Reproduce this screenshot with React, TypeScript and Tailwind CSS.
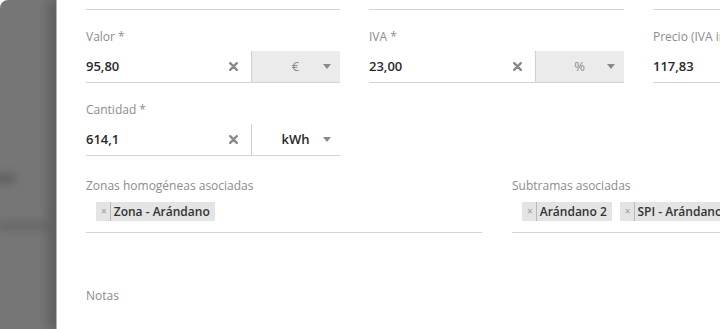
import React from 'react'

function ClearIcon() {
  return (
    <svg width="9" height="9" viewBox="0 0 9 9" className="shrink-0">
      <path d="M1.2 1.2 L7.8 7.8 M7.8 1.2 L1.2 7.8" stroke="#8a8a8a" strokeWidth="2.4" strokeLinecap="round" />
    </svg>
  )
}

function Caret() {
  return (
    <svg width="8" height="5" viewBox="0 0 8 5" className="shrink-0">
      <path d="M0 0 L8 0 L4 5 Z" fill="#8a8a8a" />
    </svg>
  )
}

function Label({ children }: { children: React.ReactNode }) {
  return <div className="text-[12px] leading-[16px] text-[#8c8c8c] whitespace-nowrap">{children}</div>
}

function UnitField({ label, value, unit, muted }: { label: string; value: string; unit: string; muted?: boolean }) {
  return (
    <div className="pt-[19px]">
      <Label>{label}</Label>
      <div className="mt-[6px] h-[32px] flex items-center border-b border-[#d4d4d4]">
        <span className="flex-1 text-[13px] font-semibold text-[#2a2a2a]">{value}</span>
        <ClearIcon />
        <div
          className={
            muted
              ? 'ml-[13px] w-[89px] h-full flex items-center border-l border-[#cfcfcf] bg-[#ebebeb]'
              : 'ml-[13px] w-[89px] h-full flex items-center border-l border-[#cfcfcf] bg-white'
          }
        >
          <span
            className={
              muted
                ? 'flex-1 pl-[16px] text-center text-[13px] text-[#8a8a8a]'
                : 'flex-1 pl-[16px] text-center text-[13px] font-semibold text-[#2a2a2a]'
            }
          >
            {unit}
          </span>
          <span className="mr-[9px]">
            <Caret />
          </span>
        </div>
      </div>
    </div>
  )
}

function Chip({ text }: { text: string }) {
  return (
    <div className="h-[19px] flex items-center bg-[#e4e4e4] shrink-0">
      <span className="pl-[5px] pr-[3px] text-[10px] leading-[19px] text-[#999]">×</span>
      <span className="h-full border-l border-[#b9b9b9]"></span>
      <span className="pl-[3px] pr-[5px] text-[12px] font-semibold text-[#333] whitespace-nowrap">{text}</span>
    </div>
  )
}

function TagField({ label, chips }: { label: string; chips: string[] }) {
  return (
    <div className="pt-[22px]">
      <Label>{label}</Label>
      <div className="mt-[6px] h-[33px] flex gap-[8px] pt-[2px] pl-[10px] border-b border-[#d4d4d4] overflow-hidden">
        {chips.map((c) => (
          <Chip key={c} text={c} />
        ))}
      </div>
    </div>
  )
}

export default function App() {
  return (
    <div className="w-[720px] h-[329px] overflow-hidden flex bg-white" style={{ fontFamily: '"Open Sans", "Noto Sans", sans-serif' }}>
      <div className="w-[56px] shrink-0 relative bg-[#767676] rounded-tl-[8px] overflow-hidden">
        <div className="absolute top-[174px] left-[-6px] w-[22px] h-[9px] rounded-full bg-[#5e5e5e] blur-[4px]"></div>
        <div className="absolute top-[222px] left-[-4px] w-[52px] h-[8px] rounded-full bg-[#666] blur-[4px]"></div>
      </div>
      <div className="flex-1 min-w-0 overflow-hidden bg-white border-l border-[#b3b3b3] shadow-[-8px_0_10px_rgba(0,0,0,0.2)] relative">
        <div className="w-[822px] ml-[29px]">
          <div className="grid grid-cols-[254px_255px_255px] gap-x-[29px]">
            <div className="h-[10px] border-b border-[#d4d4d4]"></div>
            <div className="h-[10px] border-b border-[#d4d4d4]"></div>
            <div className="h-[10px] border-b border-[#d4d4d4]"></div>

            <UnitField label="Valor *" value="95,80" unit="€" muted />
            <UnitField label="IVA *" value="23,00" unit="%" muted />
            <div className="pt-[19px]">
              <Label>Precio (IVA incluido)</Label>
              <div className="mt-[6px] h-[32px] flex items-center border-b border-[#d4d4d4]">
                <span className="flex-1 text-[13px] font-semibold text-[#2a2a2a]">117,83</span>
              </div>
            </div>

            <UnitField label="Cantidad *" value="614,1" unit="kWh" />
          </div>

          <div className="grid grid-cols-2 gap-x-[30px]">
            <TagField label="Zonas homogéneas asociadas" chips={['Zona - Arándano']} />
            <TagField label="Subtramas asociadas" chips={['Arándano 2', 'SPI - Arándano']} />
          </div>

          <div className="pt-[55px]">
            <Label>Notas</Label>
          </div>
        </div>
      </div>
    </div>
  )
}
